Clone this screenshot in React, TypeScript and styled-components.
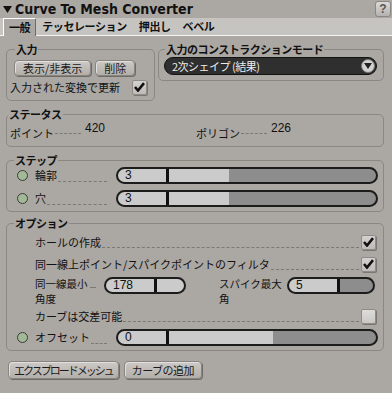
import styled, { createGlobalStyle } from 'styled-components';

const GlobalStyle = createGlobalStyle`
  html, body {
    margin: 0;
    padding: 0;
    background: #aba7a3;
  }
`;

const Panel = styled.div`
  width: 392px;
  height: 393px;
  overflow: hidden;
  display: flex;
  flex-direction: column;
  background: #aba7a3;
  color: #111;
  font-family: 'Noto Sans CJK JP', 'DejaVu Sans', sans-serif;
  font-size: 11px;
  line-height: 13px;
`;

const TitleBar = styled.div`
  height: 18px;
  display: flex;
  align-items: center;
  gap: 3px;
  padding: 0 1px 0 3px;
`;

const TitleText = styled.span`
  flex: 1;
  font-family: 'DejaVu Sans Condensed', 'Liberation Sans', sans-serif;
  font-weight: bold;
  font-size: 14px;
`;

const HelpButton = styled.div`
  width: 14px;
  height: 14px;
  display: flex;
  align-items: center;
  justify-content: center;
  border: 1px solid #8a8682;
  border-radius: 3px;
  background: linear-gradient(#dcdad8, #b4b1ae);
  color: #5a5653;
  font: bold 12px 'Liberation Sans', sans-serif;
`;

const TabBar = styled.div`
  height: 17px;
  display: flex;
  padding-left: 3px;
  background: #c6c4c1;
  border-bottom: 1px solid #f4f4f4;
`;

const Tab = styled.div<{ $active?: boolean }>`
  display: flex;
  align-items: center;
  padding: 0 ${(p) => (p.$active ? 5 : 6)}px;
  font-weight: bold;
  letter-spacing: -0.4px;
  background: ${(p) => (p.$active ? '#aba7a3' : 'transparent')};
  border-left: ${(p) => (p.$active ? '1px solid #fff' : 'none')};
  border-top: ${(p) => (p.$active ? '1px solid #fff' : 'none')};
  border-right: ${(p) => (p.$active ? '1px solid #6f6b67' : 'none')};
  margin-bottom: ${(p) => (p.$active ? '-1px' : '0')};
`;

const Content = styled.div`
  display: flex;
  flex-direction: column;
  padding: 6px 8px 0 6px;
`;

const Row = styled.div`
  display: flex;
  align-items: flex-start;
  gap: 3px;
`;

const Group = styled.fieldset<{ $width?: number; $top?: number; $pad?: string }>`
  margin: ${(p) => p.$top ?? 0}px 0 0 0;
  padding: ${(p) => p.$pad ?? '0 6px 6px 6px'};
  min-width: 0;
  ${(p) => (p.$width ? `width: ${p.$width}px; flex: none;` : 'flex: 1;')}
  box-sizing: border-box;
  border: 1px solid #8b8783;
  border-radius: 5px;
`;

const Legend = styled.legend`
  padding: 0 1px;
  margin-left: 1px;
  font-weight: bold;
  line-height: 14px;
  letter-spacing: -0.5px;
`;

const ButtonRow = styled.div`
  display: flex;
  gap: 4px;
  margin-top: 4px;
`;

const Button = styled.button<{ $h?: number; $pad?: number; $ls?: number }>`
  height: ${(p) => p.$h ?? 16}px;
  padding: 0 ${(p) => p.$pad ?? 8}px;
  font: inherit;
  letter-spacing: ${(p) => p.$ls ?? 0}px;
  color: #1a1a1a;
  background: linear-gradient(#ccc9c6, #b2aeaa);
  border: 1px solid #88847f;
  border-radius: 4px;
  box-shadow: inset 1px 1px 0 #e2e0de, 1px 1px 0 #6e6a66;
`;

const CheckLine = styled.div`
  display: flex;
  align-items: center;
  gap: 12px;
  height: 14px;
  margin: 4px 0 0 -4px;
`;

const Box = styled.div<{ $checked?: boolean }>`
  width: 13px;
  height: 13px;
  flex: none;
  display: flex;
  align-items: center;
  justify-content: center;
  border: 1px solid #8f8b87;
  border-radius: 2px;
  background: ${(p) =>
    p.$checked ? 'linear-gradient(#d4d2d0, #bebbb8)' : 'linear-gradient(#dedcda, #cac8c6)'};
  box-shadow: 1px 1px 0 #7a7672;
`;

const Dropdown = styled.div`
  height: 16px;
  margin: 1px 0 0;
  display: flex;
  align-items: center;
  justify-content: space-between;
  padding: 0 1px 0 7px;
  background: #2f2f2f;
  border: 1px solid #121212;
  border-radius: 9px;
  color: #ececec;
  letter-spacing: -0.5px;
`;

const DropKnob = styled.div`
  width: 14px;
  height: 14px;
  border-radius: 50%;
  display: flex;
  align-items: center;
  justify-content: center;
  background: #d2d2d2;
  border: 1px solid #777;
  box-sizing: border-box;
`;

const StatusRow = styled.div`
  display: grid;
  grid-template-columns: 186px 1fr;
  padding: 1px 0 6px 3px;
`;

const StatusItem = styled.div`
  display: flex;
  align-items: flex-start;
`;

const StatusLabel = styled.span`
  padding-top: 5px;
`;

const Leader = styled.span<{ $w?: number }>`
  ${(p) => (p.$w ? `width: ${p.$w}px; flex: none;` : 'flex: 1;')}
  height: 11px;
  margin: 0 2px 0 1px;
  border-bottom: 1px dashed #7c7874;
  align-self: ${(p) => (p.$w ? 'flex-start' : 'center')};
`;

const StatusValue = styled.span`
  margin-left: 2px;
  font-family: 'Liberation Sans', sans-serif;
  font-size: 12px;
`;

const SliderStack = styled.div`
  display: flex;
  flex-direction: column;
  gap: 6px;
`;

const SliderRow = styled.div<{ $gap?: number }>`
  display: flex;
  align-items: center;
  height: 17px;
  margin-top: ${(p) => p.$gap ?? 0}px;
`;

const Dot = styled.div`
  width: 9px;
  height: 9px;
  flex: none;
  margin: 0 7px 0 4px;
  border-radius: 50%;
  background: #a2b997;
  border: 1px solid #3b3b3b;
`;

const LabelCell = styled.div<{ $w: number }>`
  width: ${(p) => p.$w}px;
  flex: none;
  display: flex;
  align-items: center;
  margin-right: 7px;
`;

const Slider = styled.div<{ $w: number }>`
  position: relative;
  width: ${(p) => p.$w}px;
  height: 17px;
  flex: none;
  box-sizing: border-box;
  border: 2px solid #1c1c1c;
  border-radius: 9px;
  overflow: hidden;
  font-family: 'Liberation Sans', sans-serif;
  font-size: 12px;
  line-height: 12px;
`;

const SliderValue = styled.span`
  position: absolute;
  left: 7px;
  top: 0;
`;

const Marker = styled.div`
  position: absolute;
  left: 48px;
  top: 0;
  bottom: 0;
  width: 3px;
  background: #111;
`;

const OptionStack = styled.div`
  display: flex;
  flex-direction: column;
  padding: 5px 0 0 0;
`;

const OptionRow = styled.div<{ $gap?: number }>`
  display: flex;
  align-items: center;
  height: 14px;
  margin-top: ${(p) => p.$gap ?? 0}px;
  padding: 0 1px 0 22px;
`;

const SpinRow = styled.div`
  display: flex;
  align-items: flex-start;
  margin-top: 6px;
  padding-left: 22px;
  height: 27px;
`;

const SpinLabel = styled.div<{ $w: number; $ml?: number }>`
  width: ${(p) => p.$w}px;
  margin: -1px 0 0 ${(p) => p.$ml ?? 0}px;
  flex: none;
  display: flex;
  flex-direction: column;
  font-size: 10.5px;
  line-height: 15px;
`;

const SpinLine = styled.span`
  display: flex;
  align-items: flex-end;
  height: 15px;
  white-space: nowrap;
`;

const ShortLeader = styled.span`
  width: 6px;
  margin: 0 0 3px 2px;
  border-bottom: 1px dashed #7c7874;
`;

const FooterRow = styled.div`
  display: flex;
  gap: 5px;
  margin: 10px 0 0 2px;
`;

const Check = () => (
  <svg width="11" height="10" viewBox="0 0 11 10">
    <path d="M1 5 L4 8.5 L10 1.2" fill="none" stroke="#111" strokeWidth="2.6" />
  </svg>
);

const SliderBar = ({ value, width, fill }: { value: string; width: number; fill: number }) => (
  <Slider
    $w={width}
    style={{
      background: `linear-gradient(to right, #cbcbcb ${fill}%, #8d8d8d ${fill}%)`,
    }}
  >
    <SliderValue>{value}</SliderValue>
    <Marker />
  </Slider>
);

const tabs = ['一般', 'テッセレーション', '押出し', 'ベベル'];

export default function App() {
  return (
    <Panel>
      <GlobalStyle />
      <TitleBar>
        <svg width="9" height="7" viewBox="0 0 9 7">
          <polygon points="0,0 9,0 4.5,7" fill="#111" />
        </svg>
        <TitleText>Curve To Mesh Converter</TitleText>
        <HelpButton>?</HelpButton>
      </TitleBar>
      <TabBar>
        {tabs.map((t, i) => (
          <Tab key={t} $active={i === 0}>
            {t}
          </Tab>
        ))}
      </TabBar>

      <Content>
        <Row>
          <Group $width={149} $pad="0 6px 6px 7px">
            <Legend>入力</Legend>
            <ButtonRow>
              <Button>表示/非表示</Button>
              <Button>削除</Button>
            </ButtonRow>
            <CheckLine>
              <span>入力された変換で更新</span>
              <Box $checked>
                <Check />
              </Box>
            </CheckLine>
          </Group>
          <Group $pad="0 6px 5px 5px">
            <Legend>入力のコンストラクションモード</Legend>
            <Dropdown>
              <span>2次シェイプ (結果)</span>
              <DropKnob>
                <svg width="8" height="6" viewBox="0 0 8 6">
                  <polygon points="0,0 8,0 4,6" fill="#222" />
                </svg>
              </DropKnob>
            </Dropdown>
          </Group>
        </Row>

        <Group $top={6} $pad="0 6px 0 0">
          <Legend>ステータス</Legend>
          <StatusRow>
            <StatusItem>
              <StatusLabel>ポイント</StatusLabel>
              <Leader $w={26} />
              <StatusValue>420</StatusValue>
            </StatusItem>
            <StatusItem>
              <StatusLabel>ポリゴン</StatusLabel>
              <Leader $w={26} />
              <StatusValue>226</StatusValue>
            </StatusItem>
          </StatusRow>
        </Group>

        <Group $top={6} $pad="0 6px 4px 6px">
          <Legend>ステップ</Legend>
          <SliderStack>
            <SliderRow>
              <Dot />
              <LabelCell $w={74}>
                <span>輪郭</span>
                <Leader />
              </LabelCell>
              <SliderBar value="3" width={262} fill={43} />
            </SliderRow>
            <SliderRow>
              <Dot />
              <LabelCell $w={74}>
                <span>穴</span>
                <Leader />
              </LabelCell>
              <SliderBar value="3" width={262} fill={43} />
            </SliderRow>
          </SliderStack>
        </Group>

        <Group $top={4} $pad="0 6px 4px 6px">
          <Legend>オプション</Legend>
          <OptionStack>
            <OptionRow>
              <span>ホールの作成</span>
              <Leader />
              <Box $checked>
                <Check />
              </Box>
            </OptionRow>
            <OptionRow $gap={8}>
              <span>同一線上ポイント/スパイクポイントのフィルタ</span>
              <Leader />
              <Box $checked>
                <Check />
              </Box>
            </OptionRow>
            <SpinRow>
              <SpinLabel $w={69}>
                <SpinLine>
                  同一線最小
                  <ShortLeader />
                </SpinLine>
                <SpinLine>角度</SpinLine>
              </SpinLabel>
              <SliderBar value="178" width={82} fill={100} />
              <SpinLabel $w={68} $ml={33}>
                <SpinLine>スパイク最大</SpinLine>
                <SpinLine>角</SpinLine>
              </SpinLabel>
              <SliderBar value="5" width={88} fill={60} />
            </SpinRow>
            <OptionRow $gap={5}>
              <span>カーブは交差可能</span>
              <Leader />
              <Box />
            </OptionRow>
            <SliderRow $gap={6}>
              <Dot />
              <LabelCell $w={74}>
                <span>オフセット</span>
                <Leader />
              </LabelCell>
              <SliderBar value="0" width={262} fill={60} />
            </SliderRow>
          </OptionStack>
        </Group>

        <FooterRow>
          <Button $h={18} $pad={5} $ls={-2}>
            エクスプロードメッシュ
          </Button>
          <Button $h={18} $pad={7} $ls={-0.5}>
            カーブの追加
          </Button>
        </FooterRow>
      </Content>
    </Panel>
  );
}
